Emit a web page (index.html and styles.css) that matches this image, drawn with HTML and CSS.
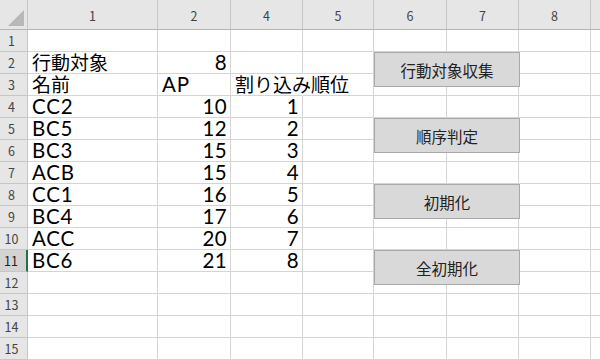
FILE: index.html
```html
<!DOCTYPE html>
<html lang="ja">

<head>
    <meta charset="UTF-8">
    <meta name="viewport" content="width=device-width, initial-scale=1.0">
    <title>行動順</title>
    <link rel="stylesheet" href="styles.css">
</head>

<body>
    <div class="sheet">
        <div id="grid" class="grid"></div>
        <button class="macro-btn btn-collect">行動対象収集</button>
        <button class="macro-btn btn-order">順序判定</button>
        <button class="macro-btn btn-init">初期化</button>
        <button class="macro-btn btn-reset">全初期化</button>
    </div>

    <script>
        const colHeaders = ['1', '2', '4', '5', '6', '7', '8', ''];
        const rowCount = 15;
        const selectedRow = 11;

        // row number -> [col1, col2, col4]
        const data = {
            2: ['行動対象', '8', ''],
            3: ['名前', 'AP', '割り込み順位'],
            4: ['CC2', '10', '1'],
            5: ['BC5', '12', '2'],
            6: ['BC3', '15', '3'],
            7: ['ACB', '15', '4'],
            8: ['CC1', '16', '5'],
            9: ['BC4', '17', '6'],
            10: ['ACC', '20', '7'],
            11: ['BC6', '21', '8']
        };

        const grid = document.getElementById('grid');
        let html = '<div class="corner"><span class="corner-tri"></span></div>';
        html += colHeaders.map(h => `<div class="col-head">${h}</div>`).join('');

        for (let r = 1; r <= rowCount; r++) {
            const rowClass = r === selectedRow ? 'row-head selected' : 'row-head';
            html += `<div class="${rowClass}">${r}</div>`;
            const values = data[r] || ['', '', ''];
            for (let c = 0; c < colHeaders.length; c++) {
                let text = c < 3 ? values[c] : '';
                let cls = 'cell';
                if (c > 0 && /^\d+$/.test(text)) cls += ' num';
                if (/^[A-Za-z0-9]+$/.test(text)) cls += ' latin';
                if (r === 3 && c === 2) cls += ' overflow';
                html += `<div class="${cls}"><span>${text}</span></div>`;
            }
        }
        grid.innerHTML = html;
    </script>
</body>

</html>
```

FILE: styles.css
```css
:root {
    --head-bg: #e6e6e6;
    --head-line: #c6c6c6;
    --grid-line: #d4d4d4;
    --head-text: #444444;
    --cell-text: #000000;
    --accent: #217346;
    --btn-bg: #d9d9d9;
    --btn-border: #a9a9a9;
}

body {
    margin: 0;
    background: #ffffff;
    font-family: 'Noto Sans CJK JP', 'Noto Sans', sans-serif;
    overflow: hidden;
}

.sheet {
    position: relative;
    width: 600px;
    height: 360px;
    overflow: hidden;
}

.grid {
    display: grid;
    grid-template-columns: 28px 130px 73px 72px 71px 73px 72px 72px 40px;
    grid-template-rows: 30px repeat(15, 22px);
}

.corner {
    background-color: var(--head-bg);
    border-right: 1px solid var(--head-line);
    border-bottom: 1px solid #b5b5b5;
    position: relative;
}

.corner-tri {
    position: absolute;
    right: 3px;
    bottom: 3px;
    width: 0;
    height: 0;
    border-left: 16px solid transparent;
    border-bottom: 16px solid #b8b8b8;
}

.col-head {
    background-color: var(--head-bg);
    border-right: 1px solid var(--head-line);
    border-bottom: 1px solid #b5b5b5;
    color: var(--head-text);
    font-size: 12.5px;
    display: flex;
    align-items: center;
    justify-content: center;
    padding-top: 2px;
}

.row-head {
    background-color: var(--head-bg);
    border-right: 1px solid var(--head-line);
    border-bottom: 1px solid var(--head-line);
    color: var(--head-text);
    font-size: 12.5px;
    display: flex;
    align-items: center;
    justify-content: center;
    padding-right: 4px;
}

.row-head.selected {
    background-color: #d3d3d3;
    color: #222222;
    border-right: 2px solid var(--accent);
}

.cell {
    border-right: 1px solid var(--grid-line);
    border-bottom: 1px solid var(--grid-line);
    color: var(--cell-text);
    font-size: 19px;
    line-height: 22px;
    padding: 0 3px 0 4px;
    white-space: nowrap;
    overflow: visible;
    display: flex;
    align-items: flex-end;
}

.cell.latin {
    font-family: Lato, 'Noto Sans', sans-serif;
    font-size: 20.5px;
    letter-spacing: 0.8px;
}

.cell.num {
    justify-content: flex-end;
    letter-spacing: 0.4px;
}

.cell.overflow {
    border-right-color: transparent;
    position: relative;
    z-index: 1;
}

.macro-btn {
    position: absolute;
    left: 374px;
    width: 146px;
    height: 35px;
    background-color: var(--btn-bg);
    border: 1px solid var(--btn-border);
    color: #222222;
    font-family: 'Noto Sans CJK JP', sans-serif;
    font-size: 15.5px;
    padding: 0;
    cursor: pointer;
}

.btn-collect {
    top: 52px;
}

.btn-order {
    top: 118px;
}

.btn-init {
    top: 184px;
}

.btn-reset {
    top: 250px;
}
```
